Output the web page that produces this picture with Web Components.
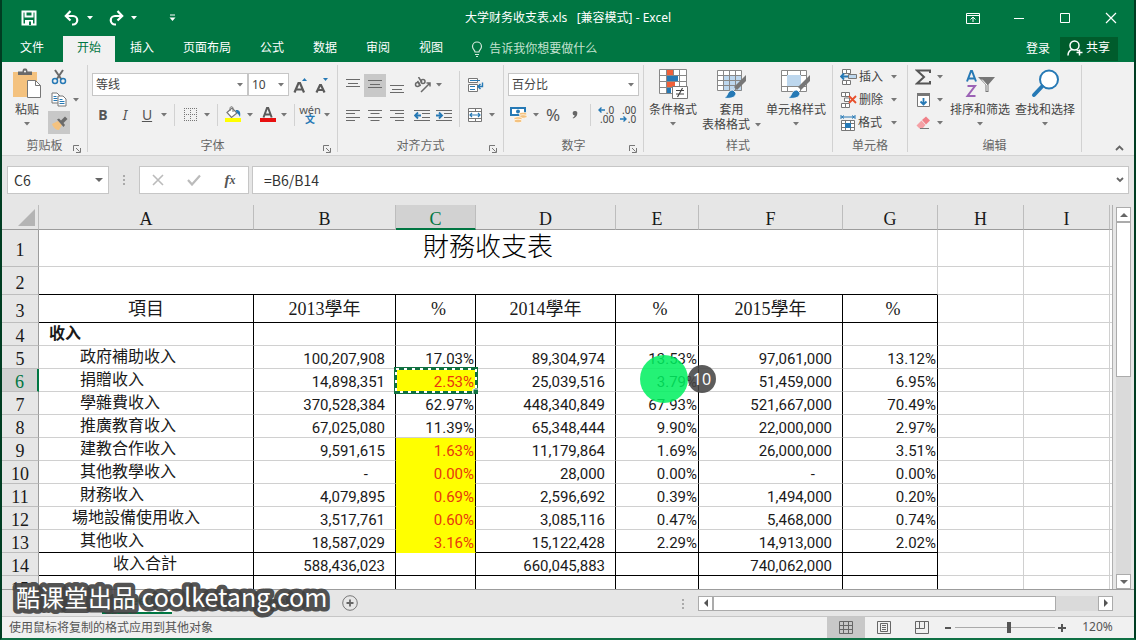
<!DOCTYPE html>
<html lang="zh-CN">
<head>
<meta charset="utf-8">
<title>大学财务收支表.xls - Excel</title>
<style>
    html, body { margin: 0; height: 100%; }
    body {
        --green: #007642;
        --ink: #444;
        --line: #c6c6c6;
        --chrome: #e6e6e6;
        --ribbon: #f1f1f1;
        --blue: #2679b5;
        font: 12px/16px "Noto Sans", "Noto Sans CJK SC", sans-serif;
        color: var(--ink);
        overflow: hidden;
    }
</style>
</head>
<body>
<excel-window></excel-window>

<script>
const ICONS = {
    save: [16, 16, `<path d="M1.500 1.500h13v13h-13z M4.500 1.500v5h7v-5" fill="none" stroke="#fff" stroke-width="2"/><path d="M4 10h8v4H4z" fill="#fff"/><path d="M8 11.500h2V15H8z" fill="#007642"/>`],
    undo: [16, 16, `<path d="M2 6h7a4.2 4.2 0 0 1 0 8.500H8" fill="none" stroke="#fff" stroke-width="2.200"/><path d="M6.500 1 1.800 6l4.700 4.500" fill="none" stroke="#fff" stroke-width="2.200"/>`],
    redo: [16, 16, `<path d="M14 6H7a4.2 4.2 0 0 0 0 8.500h1" fill="none" stroke="#fff" stroke-width="2.200"/><path d="M9.500 1l4.700 5-4.700 4.500" fill="none" stroke="#fff" stroke-width="2.200"/>`],
    customize: [7, 8, `<path d="M1 1h5" stroke="#fff"/><path d="M0.500 3.500h6l-3 3.500z" fill="#fff"/>`],
    caret: [6, 4, `<path d="M0 0h6L3 3.500z" fill="currentColor"/>`],
    ribbonopts: [14, 11, `<path d="M.5.500h13v10H.5z M.5 2.500h13 M7 9V4.500 M4.500 6.500 7 4l2.500 2.500" fill="none" stroke="#fff"/>`],
    minimize: [12, 12, `<path d="M1 6.500h10" stroke="#fff"/>`],
    maximize: [12, 12, `<path d="M1.500 1.500h9v9h-9z" fill="none" stroke="#fff"/>`],
    close: [12, 12, `<path d="M1 1l10 10M11 1 1 11" stroke="#fff" stroke-width="1.200"/>`],
    bulb: [12, 16, `<path d="M4 11c0-2-2.500-2.500-2.500-5.500a4.500 4.500 0 0 1 9 0C10.500 8.500 8 9 8 11z M4 13.500h4 M5 15.500h2" fill="none" stroke="#d5eadd" stroke-width="1.200"/>`],
    person: [17, 16, `<circle cx="7.500" cy="5.500" r="4.500" fill="none" stroke="#fff" stroke-width="1.500"/><path d="M1 15.500c0-4 2-5.500 4.500-6 M9.500 9.500l2 1.500 M12.500 9.500v6 M9.500 12.500h6" fill="none" stroke="#fff" stroke-width="1.500"/>`],
    paste: [30, 31, `<path d="M1 4h24v25H1z" fill="#f4c27f"/><path d="M6 7V3.500h4.500C10.500 1 11.500.500 13 .500s2.500.500 2.500 3H20V7z" fill="#6a6a6a"/><circle cx="13" cy="3.500" r="1" fill="#fff"/><path d="M15.500 12.500h8l5 5v12h-13z" fill="#fff" stroke="#777"/><path d="M23.500 12.500v5h5" fill="none" stroke="#777"/>`],
    cut: [16, 16, `<path d="M4 1l6.500 9.500M12 1 5.500 10.500" stroke="#6a6a6a" stroke-width="2"/><circle cx="4" cy="12" r="2.500" fill="none" stroke="#2679b5" stroke-width="1.500"/><circle cx="12" cy="12" r="2.500" fill="none" stroke="#2679b5" stroke-width="1.500"/>`],
    copy: [16, 15, `<path d="M1 1h5l3 3v7H1z" fill="#fff" stroke="#777"/><path d="M2.500 4.500h3M2.500 6.500h4M2.500 8.500h4" stroke="#2679b5"/><path d="M7 4h5l3 3v7H7z" fill="#fff" stroke="#777"/><path d="M8.500 7.500h3M8.500 9.500h5M8.500 11.500h5" stroke="#2679b5"/>`],
    painter: [17, 16, `<path d="M1 9l6-3 4 4-3 5c-2 0-5-1-7-6z" fill="#f4c27f"/><path d="M6 4.500l2-1 2 2 4-4 2.500 2.500-4 4 1.500 2-1.500 2z" fill="#6a6a6a"/>`],
    growfont: [15, 16, `<path d="M1.500 15.500 5.500 6h1.500l4 9.500M3 12.500h6.500" fill="none" stroke="#5a5a5a" stroke-width="2.200"/><path d="M9 4h5l-2.500-3z" fill="#2679b5"/>`],
    shrinkfont: [14, 16, `<path d="M1.500 15.500 5 8h1l3.500 7.500M3 13h5" fill="none" stroke="#5a5a5a" stroke-width="2.200"/><path d="M8 1h5l-2.500 3z" fill="#2679b5"/>`],
    border: [15, 15, `<path d="M1 1.500h13M1 7.500h13M1.500 1v13M7.500 1v13M13.500 1v13" stroke="#777" stroke-dasharray="1 1"/><path d="M1 13.500h13" stroke="#777" stroke-dasharray="1 1"/>`],
    bucket: [18, 17, `<path d="M3 6.500 8 2l5 5-5.500 4.500z" fill="#fff" stroke="#777" stroke-width="1.200"/><path d="M6 5V2.500C6 0 9 0 9 2.500V6" fill="none" stroke="#777"/><path d="M11.500 4c4-.5 5.500 2 4.500 7-1-2-1.500-3-3-4z" fill="#2679b5"/><path d="M1 12h16v4H1z" fill="#ff0"/>`],
    fontcolor: [17, 17, `<path d="M4.500 11.500 8 2h1.200l3.500 9.500M6 8.500h5.500" fill="none" stroke="#5a5a5a" stroke-width="2"/><path d="M1 12h16v4H1z" fill="#e81010"/>`],
    alignTop: [14, 15, `<path d="M0 1.500h14M2 5.500h10M0 8.500h14" stroke="#6a6a6a"/>`],
    alignMid: [14, 13, `<path d="M0 1.500h14M2 5.500h10M0 8.500h14" stroke="#6a6a6a"/>`],
    alignBot: [14, 17, `<path d="M0 8.500h14M2 12.500h10M0 15.500h14" stroke="#6a6a6a"/>`],
    left: [14, 13, `<path d="M0 1.500h14M0 4.500h9M0 8.500h14M0 11.500h9" stroke="#6a6a6a"/>`],
    center: [14, 13, `<path d="M0 1.500h14M2.500 4.500h9M0 8.500h14M2.500 11.500h9" stroke="#6a6a6a"/>`],
    right: [14, 13, `<path d="M0 1.500h14M5 4.500h9M0 8.500h14M5 11.500h9" stroke="#6a6a6a"/>`],
    orient: [17, 16, `<g fill="none" stroke="#6a6a6a" stroke-width="1.500"><circle cx="3.500" cy="7.500" r="2"/><path d="M3.500 4 6.500 9"/><circle cx="9" cy="4.500" r="2"/><path d="M4.500 0 8 5.500M7 15 16 6M16 9.500V6h-3.500"/></g>`],
    outdent: [16, 13, `<path d="M0 1.500h16M8 4.500h8M8 8.500h8M0 11.500h16" stroke="#6a6a6a"/><path d="M1 6.500h6M4 3.500l-3 3 3 3" fill="none" stroke="#2679b5" stroke-width="1.800"/>`],
    indent: [16, 13, `<path d="M0 1.500h16M8 4.500h8M8 8.500h8M0 11.500h16" stroke="#6a6a6a"/><path d="M0 6.500h6M3 3.500l3 3-3 3" fill="none" stroke="#2679b5" stroke-width="1.800"/>`],
    wrap: [17, 16, `<path d="M1.500 1.500h9v4h-9zM1.500 7.500h9v7h-9z" fill="#fff" stroke="#777"/><path d="M3 3.500h10M3 9.500h5M3 12.500h5" stroke="#2679b5"/><path d="M15.500 5.500v4h-4M13.500 7l-2.500 2.500 2.500 2.500" fill="none" stroke="#2679b5" stroke-width="1.400"/>`],
    merge: [16, 16, `<path d="M1.500 1.500h13v13h-13z M1.500 4.500h13M1.500 11.500h13M8.500 1.500v3M8.500 11.500v3" fill="#fff" stroke="#777"/><path d="M3 8h10M5 6 3 8l2 2M11 6l2 2-2 2" fill="none" stroke="#2679b5" stroke-width="1.200"/>`],
    money: [18, 17, `<path d="M0 1h16v9H0z" fill="#2679b5"/><path d="M2 3h12v5H2z" fill="#fff"/><circle cx="8" cy="5.500" r="2" fill="#2679b5"/><g fill="#f4c27f" stroke="#fff" stroke-width=".7"><ellipse cx="13" cy="8" rx="4" ry="1.800"/><ellipse cx="13" cy="10.500" rx="4" ry="1.800"/><ellipse cx="8" cy="12.500" rx="4" ry="1.800"/><ellipse cx="8" cy="15" rx="4" ry="1.800"/></g>`],
    comma: [8, 14, `<path d="M4 3a2.200 2.200 0 0 1 2.300 2.500C6.300 8 4.500 9.500 2 10.500l-.3-.8C3 9 3.700 8.200 3.700 7.500A2.200 2.200 0 0 1 4 3z" fill="#666"/>`],
    cond: [30, 32, `<path d="M1.500 1.500h27v24h-27zM1.500 7.500h27M1.500 13.500h27M1.500 19.500h27M8.500 1.500v24M15.500 1.500v24M21.500 1.500v24" fill="#fff" stroke="#888"/><path d="M9 2h6v5H9zM9 14h8v5H9z" fill="#f0603a"/><path d="M9 8h11v5H9zM9 20h4v5H9z" fill="#2679b5"/><path d="M14.500 18.500h15v12h-15z" fill="#fff" stroke="#777"/><path d="M18 22.500h8M18 26h8M24.500 20l-5 9" stroke="#444" stroke-width="1.200"/>`],
    tablefmt: [31, 30, `<path d="M1.500 1.500h24v20h-24z" fill="#fff"/><path d="M8 7h18v15H8z" fill="#bdd7ee"/><path d="M1.500 1.500h24v20h-24zM1.500 6.500h24M1.500 11.500h24M1.500 16.500h24M7.500 1.500v20M13.500 1.500v20M19.500 1.500v20" fill="none" stroke="#888"/><path d="M30 6v6l-9 9-3-3z" fill="#777"/><path d="M8 29c4-1 3-8 9-8l3 3c0 5-7 6-12 5z" fill="#2679b5" stroke="#fff" stroke-width=".8"/>`],
    cellstyle: [31, 30, `<path d="M1.500 1.500h25v21h-25zM1.500 6.500h25M1.500 17.500h25M7.500 1.500v21M20.500 1.500v21" fill="#fff" stroke="#888"/><path d="M7 6h14v11H7z" fill="#bdd7ee"/><path d="M30 6v6l-9 9-3-3z" fill="#777"/><path d="M8 29c4-1 3-8 9-8l3 3c0 5-7 6-12 5z" fill="#2679b5" stroke="#fff" stroke-width=".8"/>`],
    insert: [17, 16, `<path d="M2.500.500h4v4h-4zM6.500.500h4v4h-4zM2.500 11.500h4v4h-4zM6.500 11.500h4v4h-4z" fill="#fff" stroke="#777"/><path d="M8.500 5.500h8v4h-8z" fill="#bdd7ee" stroke="#777"/><path d="M1 7.500h7M4 4.500l-3 3 3 3" fill="none" stroke="#2679b5" stroke-width="1.800"/>`],
    remove: [17, 16, `<path d="M1.500.500h4v4h-4zM5.500.500h4v4h-4zM1.500 11.500h4v4h-4zM5.500 11.500h4v4h-4zM4.500 6h5v3.500h-5z" fill="#fff" stroke="#777"/><path d="M9 4l7 7M16 4l-7 7" stroke="#e8502c" stroke-width="1.800"/>`],
    format: [16, 16, `<path d="M1 2h14M1 0v4M15 0v4M4 .5 2 2l2 1.500M12 .500 14 2l-2 1.500" fill="none" stroke="#2679b5"/><path d="M1.500 5.500h13v10h-13zM1.500 8.500h13M1.500 12.500h13M5.500 5.500v10M10.500 5.500v10" fill="#fff" stroke="#777"/><path d="M5 8h6v5H5z" fill="#2679b5"/>`],
    sum: [17, 16, `<path d="M15 4V1.500H2L9 8l-7 6.500h13V12" fill="none" stroke="#555" stroke-width="2"/>`],
    fill: [15, 16, `<path d="M1.500 1.500h12v13h-12z" fill="#fff" stroke="#777"/><path d="M1 1h13v3H1z" fill="#777"/><path d="M7.500 6v6.500M4.500 9.500l3 3 3-3" fill="none" stroke="#2679b5" stroke-width="1.800"/>`],
    eraser: [16, 14, `<path d="M7 4l4-3.500 4 4-4 4z" fill="#f08088"/><path d="M6.500 4.500l4 4.500-3 3.500H4.500l-3-3z" fill="#f5a0a5"/><path d="M5 12.500h9" stroke="#777"/>`],
    sort: [30, 30, `<path d="M2 12.500 6 2h1l4 10.500M3.500 9.500h6" fill="none" stroke="#2679b5" stroke-width="2"/><path d="M2.500 17h7.500L2.500 27h8" fill="none" stroke="#9b62b5" stroke-width="2"/><path d="M13 8h17l-6.500 7.500v7.500h-3v-7.500z" fill="#777"/><path d="M17 10.500l5 5.500v6" fill="none" stroke="#fff"/>`],
    find: [30, 30, `<circle cx="19" cy="10.500" r="9" fill="#fff" stroke="#2679b5" stroke-width="2"/><path d="M12 17.500 4 26" stroke="#2679b5" stroke-width="4" stroke-linecap="round"/>`],
    launcher: [8, 8, `<path d="M.5 6V.5H6M7.500 3v4.500H3M3 3l3.500 3.500" fill="none" stroke="#777"/>`],
    collapse: [9, 6, `<path d="M1 5l3.500-3.500L8 5" fill="none" stroke="#666" stroke-width="1.800"/>`],
    expand: [8, 6, `<path d="M1 1l3 3 3-3" fill="none" stroke="#666" stroke-width="1.800"/>`],
    dots: [2, 12, `<path d="M0 1h2v2H0zM0 5h2v2H0zM0 9h2v2H0z" fill="#aaa"/>`],
    cancel: [12, 12, `<path d="M1 1l10 10M11 1 1 11" stroke="#bbb" stroke-width="1.600"/>`],
    accept: [14, 12, `<path d="M1 6l4 4.500L13 1.500" fill="none" stroke="#bbb" stroke-width="2.200"/>`],
    corner: [17, 17, `<path d="M17 0v17H0z" fill="#b4b4b4"/>`],
    up: [8, 4, `<path d="M0 4h8L4 0z" fill="#666"/>`],
    down: [8, 4, `<path d="M0 0h8L4 4z" fill="#666"/>`],
    prev: [4, 8, `<path d="M4 0v8L0 4z" fill="#555"/>`],
    next: [4, 8, `<path d="M0 0v8l4-4z" fill="#555"/>`],
    add: [16, 16, `<circle cx="8" cy="8" r="7.300" fill="none" stroke="#777"/><path d="M8 4.500v7M4.500 8h7" stroke="#666" stroke-width="1.800"/>`],
    viewNormal: [14, 14, `<path d="M.5.500h13v12H.5zM.5 4.500h13M.5 8.500h13M4.500.500v12M9.500.500v12" fill="none" stroke="#666"/>`],
    viewPage: [14, 14, `<path d="M.5.500h13v12H.5zM3.500 2.500h7v8h-7zM5 4.500h4M5 6.500h4M5 8.500h4" fill="none" stroke="#666"/>`],
    viewBreak: [14, 14, `<path d="M.5.500h13v12H.5zM4.500.500v7M9.500.500v7M.5 7.500h9" fill="none" stroke="#666"/>`],
    minus: [8, 8, `<path d="M1 4h6" stroke="#555" stroke-width="2"/>`],
    plus: [8, 8, `<path d="M0 4h8M4 0v8" stroke="#555" stroke-width="2"/>`]
};

const RESET = `
    button, input, select { font: inherit; color: inherit; margin: 0; padding: 0; border: 0; border-radius: 0; background: none; outline: 0; appearance: none; box-sizing: border-box; min-width: 0; }
    button { display: flex; align-items: center; justify-content: center; cursor: pointer; }
`;

class AppIcon extends HTMLElement {
    connectedCallback() {
        const [w, h, body] = ICONS[this.getAttribute('name')];
        this.attachShadow({ mode: 'open' }).innerHTML = `
            <style>:host { display: inline-flex; flex: none; } svg { display: block; }</style>
            <svg width="${w}" height="${h}" viewBox="0 0 ${w} ${h}" aria-hidden="true">${body}</svg>`;
    }
}
customElements.define('app-icon', AppIcon);

// Elements whose shadow markup never changes
function define(name, css, html) {
    customElements.define(name, class extends HTMLElement {
        connectedCallback() {
            if (this.shadowRoot) return;
            this.attachShadow({ mode: 'open' }).innerHTML = `<style>${RESET}${css}</style>${html}`;
        }
    });
}

// Small ribbon button; "drop" makes it a narrow arrow, "on" keeps it pressed
class ToolButton extends HTMLElement {
    connectedCallback() {
        const drop = this.hasAttribute('drop');
        const icon = drop ? 'caret' : this.getAttribute('icon');
        this.attachShadow({ mode: 'open' }).innerHTML = `
            <style>${RESET}
                :host { display: block; flex: none; }
                button { width: ${drop ? 12 : 22}px; height: 23px; color: ${drop ? '#777' : '#555'}; }
                button:hover, :host([on]) button { background: #c8c8c8; }
            </style>
            <button aria-label="${this.getAttribute('label') || '更多'}">${icon ? `<app-icon name="${icon}"></app-icon>` : '<slot></slot>'}</button>`;
    }
}
customElements.define('tool-button', ToolButton);

// Large button: icon on top, caption underneath, arrow last
class BigButton extends HTMLElement {
    connectedCallback() {
        const inline = this.hasAttribute('inline-arrow');
        this.attachShadow({ mode: 'open' }).innerHTML = `
            <style>${RESET}
                :host { display: block; flex: none; }
                button { flex-direction: column; justify-content: flex-start; line-height: 15px; white-space: nowrap; }
                .pic { height: 37px; display: flex; align-items: center; }
                .row { display: flex; align-items: center; gap: 5px; }
                .arrow { height: 14px; display: flex; align-items: center; color: #777; }
                .row app-icon { color: #777; }
            </style>
            <button>
                <span class="pic"><app-icon name="${this.getAttribute('icon')}"></app-icon></span>
                <slot></slot>
                ${inline
                    ? `<span class="row"><slot name="second"></slot><app-icon name="caret"></app-icon></span>`
                    : `<span class="arrow"><app-icon name="caret"></app-icon></span>`}
            </button>`;
    }
}
customElements.define('big-button', BigButton);

class ComboBox extends HTMLElement {
    connectedCallback() {
        const value = this.getAttribute('value');
        this.attachShadow({ mode: 'open' }).innerHTML = `
            <style>${RESET}
                :host { display: grid; height: 23px; box-sizing: border-box; background: #fff; border: 1px solid var(--line); }
                select, app-icon { grid-area: 1 / 1; }
                select { width: 100%; padding: 0 14px 0 3px; }
                app-icon { justify-self: end; align-self: center; margin-right: 4px; color: #777; pointer-events: none; }
            </style>
            <select aria-label="${this.getAttribute('label')}"><option>${value}</option></select>
            <app-icon name="caret"></app-icon>`;
    }
}
customElements.define('combo-box', ComboBox);

class RibbonGroup extends HTMLElement {
    connectedCallback() {
        const label = this.getAttribute('label');
        this.attachShadow({ mode: 'open' }).innerHTML = `
            <style>${RESET}
                :host { display: grid; grid-template-rows: 1fr 14px; box-sizing: border-box; height: 87px; padding: 0 4px; border-right: 1px solid #d2d2d2; }
                .foot { display: grid; grid-template-columns: 12px 1fr 12px; align-items: start; color: #666; text-align: center; }
                .foot button { margin-top: 7px; }
            </style>
            <div><slot></slot></div>
            <div class="foot"><span></span><span>${label}</span>${this.hasAttribute('launcher') ? `<button aria-label="${label}设置"><app-icon name="launcher"></app-icon></button>` : ''}</div>`;
    }
}
customElements.define('ribbon-group', RibbonGroup);

define('title-bar', `
    :host { display: grid; grid-template-columns: 1fr auto 1fr; align-items: center; height: 36px; background: var(--green); color: #fff; }
    .quick { display: flex; align-items: center; padding-left: 14px; }
    .quick button { height: 30px; width: 26px; }
    .quick .drop { width: 10px; }
    .quick .gap { margin-left: 17px; }
    .quick .near { margin-left: 8px; }
    .quick .last { margin-left: 28px; }
    .title { white-space: pre; }
    .win { display: flex; justify-content: flex-end; }
    .win button { width: 46px; height: 34px; }
`, `
    <div class="quick">
        <button aria-label="保存"><app-icon name="save"></app-icon></button>
        <button class="gap" aria-label="撤消"><app-icon name="undo"></app-icon></button>
        <button class="drop" aria-label="撤消列表"><app-icon name="caret"></app-icon></button>
        <button class="near" aria-label="恢复"><app-icon name="redo"></app-icon></button>
        <button class="drop" aria-label="恢复列表"><app-icon name="caret"></app-icon></button>
        <button class="drop last" aria-label="自定义快速访问工具栏"><app-icon name="customize"></app-icon></button>
    </div>
    <div class="title">大学财务收支表.xls   [兼容模式] - Excel</div>
    <div class="win">
        <button aria-label="功能区显示选项"><app-icon name="ribbonopts"></app-icon></button>
        <button aria-label="最小化"><app-icon name="minimize"></app-icon></button>
        <button aria-label="最大化"><app-icon name="maximize"></app-icon></button>
        <button aria-label="关闭"><app-icon name="close"></app-icon></button>
    </div>
`);

define('ribbon-tabs', `
    :host { display: flex; height: 26px; background: var(--green); color: #fff; }
    nav { display: flex; gap: 1px; flex: 1; }
    nav button { padding: 0 14px 2px; }
    nav .file { padding: 0 18px 2px; }
    nav .active { background: var(--ribbon); color: var(--green); }
    nav .tell { gap: 6px; color: #c4e2d0; padding: 0 13px; }
    .login { padding: 0 10px; }
    .share { background: #005c2c; height: 24px; margin: 1px 16px 0 0; padding: 0 8px 2px 7px; gap: 2px; }
`, `
    <nav>
        <button class="file">文件</button>
        <button class="active">开始</button>
        <button>插入</button>
        <button>页面布局</button>
        <button>公式</button>
        <button>数据</button>
        <button>审阅</button>
        <button>视图</button>
        <button class="tell"><app-icon name="bulb"></app-icon>告诉我你想要做什么</button>
    </nav>
    <button class="login">登录</button>
    <button class="share"><app-icon name="person"></app-icon>共享</button>
`);

define('ribbon-bar', `
    :host { display: flex; height: 94px; box-sizing: border-box; padding-top: 3px; background: var(--ribbon); border-bottom: 1px solid #d2d2d2; overflow: hidden; }
    .clip { width: 86px; } .font { width: 250px; } .align { width: 166px; } .num { width: 140px; }
    .styles { width: 189px; } .cells { width: 75px; } .edit { width: 174px; }
    .row { display: flex; align-items: center; }
    .rows { display: grid; grid-template-rows: 23px 23px; row-gap: 7px; padding-top: 8px; }
    .sep { width: 1px; height: 22px; margin: 0 4px; background: #d2d2d2; flex: none; }
    .tall { height: 56px; margin-top: 6px; }
    .stack { display: grid; grid-auto-rows: 23px; align-items: center; }
    .bigs { display: flex; justify-content: space-between; }
    .styles .bigs { padding: 0 2px 0 1px; }
    .edit .row { align-items: flex-start; }
    .edit .bigs { gap: 5px; padding-left: 4px; }
    .clip big-button { width: 32px; margin-left: 6px; }
    .clip .stack { margin-left: 1px; }
    .clip .row { align-items: flex-start; }
    .fam { flex: 1; } .size { width: 41px; }
    .gap { margin-left: 3px; }
    .cells button { justify-content: flex-start; width: 100%; height: 23px; gap: 2px; }
    .cells button app-icon:last-child { margin-left: auto; margin-right: 6px; color: #777; }
    .cells .stack { padding-left: 3px; }
    b, i, u { font-size: 14px; color: #555; }
    .pct { font-size: 17px; color: #555; }
    .wen { display: grid; font-size: 11px; line-height: 9px; text-align: center; }
    .wen em { font-style: normal; color: var(--blue); font-size: 10px; line-height: 11px; font-weight: bold; }
    .dec { display: grid; font-size: 10px; line-height: 9px; color: #444; }
    .dec span { display: flex; align-items: center; justify-content: flex-end; gap: 1px; }
    .dec svg { display: block; }
    .rest { flex: 1; display: flex; justify-content: flex-end; align-items: flex-end; padding: 0 10px 4px 0; }
`, `
    <ribbon-group class="clip" label="剪贴板" launcher>
        <div class="row">
            <big-button icon="paste">粘贴</big-button>
            <div class="stack">
                <div class="row"><tool-button class="gap" icon="cut" label="剪切"></tool-button></div>
                <div class="row"><tool-button class="gap" icon="copy" label="复制"></tool-button><tool-button drop></tool-button></div>
                <div class="row"><tool-button class="gap" icon="painter" label="格式刷" on></tool-button></div>
            </div>
        </div>
    </ribbon-group>
    <ribbon-group class="font" label="字体" launcher>
        <div class="rows">
            <div class="row">
                <combo-box class="fam" label="字体" value="等线"></combo-box>
                <combo-box class="size" label="字号" value="10"></combo-box>
                <tool-button icon="growfont" label="增大字号"></tool-button>
                <tool-button icon="shrinkfont" label="减小字号"></tool-button>
            </div>
            <div class="row">
                <tool-button label="加粗"><b>B</b></tool-button>
                <tool-button label="倾斜"><i>I</i></tool-button>
                <tool-button label="下划线"><u>U</u></tool-button>
                <tool-button drop></tool-button>
                <span class="sep"></span>
                <tool-button icon="border" label="边框"></tool-button>
                <tool-button drop></tool-button>
                <span class="sep"></span>
                <tool-button icon="bucket" label="填充颜色"></tool-button>
                <tool-button drop></tool-button>
                <tool-button icon="fontcolor" label="字体颜色"></tool-button>
                <tool-button drop></tool-button>
                <span class="sep"></span>
                <tool-button label="拼音"><span class="wen">wén<em>文</em></span></tool-button>
                <tool-button drop></tool-button>
            </div>
        </div>
    </ribbon-group>
    <ribbon-group class="align" label="对齐方式" launcher>
        <div class="row">
            <div class="rows">
                <div class="row">
                    <tool-button icon="alignTop" label="顶端对齐"></tool-button>
                    <tool-button icon="alignMid" label="垂直居中" on></tool-button>
                    <tool-button icon="alignBot" label="底端对齐"></tool-button>
                    <tool-button class="gap" icon="orient" label="方向"></tool-button>
                    <tool-button drop></tool-button>
                </div>
                <div class="row">
                    <tool-button icon="left" label="左对齐"></tool-button>
                    <tool-button icon="center" label="居中"></tool-button>
                    <tool-button icon="right" label="右对齐"></tool-button>
                    <tool-button class="gap" icon="outdent" label="减少缩进量"></tool-button>
                    <tool-button icon="indent" label="增加缩进量"></tool-button>
                </div>
            </div>
            <span class="sep tall"></span>
            <div class="rows">
                <div class="row"><tool-button icon="wrap" label="自动换行"></tool-button></div>
                <div class="row"><tool-button icon="merge" label="合并后居中"></tool-button><tool-button drop></tool-button></div>
            </div>
        </div>
    </ribbon-group>
    <ribbon-group class="num" label="数字" launcher>
        <div class="rows">
            <combo-box label="数字格式" value="百分比"></combo-box>
            <div class="row">
                <tool-button icon="money" label="会计数字格式"></tool-button>
                <tool-button drop></tool-button>
                <tool-button label="百分比样式"><span class="pct">%</span></tool-button>
                <tool-button icon="comma" label="千位分隔样式"></tool-button>
                <span class="sep"></span>
                <tool-button label="增加小数位数"><span class="dec"><span><svg width="7" height="6" viewBox="0 0 7 6"><path d="M1 3h6M3.500.500 1 3l2.500 2.500" fill="none" stroke="#2679b5" stroke-width="1.400"/></svg>.0</span><span>.00</span></span></tool-button>
                <tool-button label="减少小数位数"><span class="dec"><span>.00</span><span><svg width="7" height="6" viewBox="0 0 7 6"><path d="M0 3h6M3.500.500 6 3 3.500 5.500" fill="none" stroke="#2679b5" stroke-width="1.400"/></svg>.0</span></span></tool-button>
            </div>
        </div>
    </ribbon-group>
    <ribbon-group class="styles" label="样式">
        <div class="bigs">
            <big-button icon="cond">条件格式</big-button>
            <big-button icon="tablefmt" inline-arrow>套用<span slot="second">表格格式</span></big-button>
            <big-button icon="cellstyle">单元格样式</big-button>
        </div>
    </ribbon-group>
    <ribbon-group class="cells" label="单元格">
        <div class="stack">
            <button><app-icon name="insert"></app-icon>插入<app-icon name="caret"></app-icon></button>
            <button><app-icon name="remove"></app-icon>删除<app-icon name="caret"></app-icon></button>
            <button><app-icon name="format"></app-icon>格式<app-icon name="caret"></app-icon></button>
        </div>
    </ribbon-group>
    <ribbon-group class="edit" label="编辑">
        <div class="row">
            <div class="stack">
                <div class="row"><tool-button icon="sum" label="求和"></tool-button><tool-button drop></tool-button></div>
                <div class="row"><tool-button icon="fill" label="填充"></tool-button><tool-button drop></tool-button></div>
                <div class="row"><tool-button icon="eraser" label="清除"></tool-button><tool-button drop></tool-button></div>
            </div>
            <div class="bigs">
                <big-button icon="sort">排序和筛选</big-button>
                <big-button icon="find">查找和选择</big-button>
            </div>
        </div>
    </ribbon-group>
    <div class="rest"><button aria-label="折叠功能区"><app-icon name="collapse"></app-icon></button></div>
`);

define('formula-bar', `
    :host { display: flex; align-items: stretch; height: 49px; box-sizing: border-box; padding: 10px 5px 11px; background: var(--chrome); font: 14px/20px "Noto Sans CJK SC", sans-serif; color: #333; }
    .box { display: flex; align-items: center; background: #fff; border: 1px solid var(--line); }
    .name { width: 100px; }
    .name input { width: 82px; padding-left: 6px; }
    .name button, .more { width: 18px; align-self: stretch; color: #777; }
    .grip { width: 30px; display: flex; align-items: center; justify-content: center; }
    .acts { width: 108px; justify-content: space-around; }
    .acts button { width: 34px; }
    .fx { font: italic bold 15px/20px "Liberation Serif", serif; color: #555; }
    .fx small { font-size: 12px; }
    .formula { flex: 1; margin-left: 3px; }
    .formula input { flex: 1; padding-left: 11px; }
    .more { width: 16px; }
`, `
    <div class="box name"><input aria-label="名称框" value="C6"><button aria-label="名称列表"><app-icon name="down"></app-icon></button></div>
    <div class="grip"><app-icon name="dots"></app-icon></div>
    <div class="box acts">
        <button aria-label="取消"><app-icon name="cancel"></app-icon></button>
        <button aria-label="输入"><app-icon name="accept"></app-icon></button>
        <button class="fx" aria-label="插入函数">f<small>x</small></button>
    </div>
    <div class="box formula"><input aria-label="编辑栏" value="=B6/B14"><button class="more" aria-label="展开编辑栏"><app-icon name="expand"></app-icon></button></div>
`);

const COLUMNS = [['A', 215], ['B', 142], ['C', 80], ['D', 140], ['E', 83], ['F', 144], ['G', 95], ['H', 86], ['I', 86]];
// label, indent, then B..G; a trailing * marks a highlighted cell
const ROWS = [
    ['收入', 10, '', '', '', '', '', ''],
    ['政府補助收入', 41, '100,207,908', '17.03%', '89,304,974', '13.53%', '97,061,000', '13.12%'],
    ['捐贈收入', 41, '14,898,351', '2.53%*', '25,039,516', '3.79%', '51,459,000', '6.95%'],
    ['學雜費收入', 41, '370,528,384', '62.97%', '448,340,849', '67.93%', '521,667,000', '70.49%'],
    ['推廣教育收入', 41, '67,025,080', '11.39%', '65,348,444', '9.90%', '22,000,000', '2.97%'],
    ['建教合作收入', 41, '9,591,615', '1.63%*', '11,179,864', '1.69%', '26,000,000', '3.51%'],
    ['其他教學收入', 41, '-', '0.00%*', '28,000', '0.00%', '-', '0.00%'],
    ['財務收入', 41, '4,079,895', '0.69%*', '2,596,692', '0.39%', '1,494,000', '0.20%'],
    ['場地設備使用收入', 33, '3,517,761', '0.60%*', '3,085,116', '0.47%', '5,468,000', '0.74%'],
    ['其他收入', 41, '18,587,029', '3.16%*', '15,122,428', '2.29%', '14,913,000', '2.02%'],
    ['收入合計', 74, '588,436,023', '', '660,045,883', '', '740,062,000', ''],
    ['', 0, '', '', '', '', '', '']
];

class SheetGrid extends HTMLElement {
    connectedCallback() {
        this.attachShadow({ mode: 'open' }).innerHTML = `
            <style>
                :host { display: block; position: relative; flex: 1; min-width: 0; overflow: hidden; background: #fff; box-sizing: border-box; color: #1a1a1a; }
                table { table-layout: fixed; width: 100%; border-spacing: 0; font: 15px/18px Roboto, sans-serif; }
                th, td { box-sizing: border-box; padding: 0; border: 0 solid #d0d0d0; border-width: 0 1px 1px 0; white-space: nowrap; font-weight: normal; }
                th { font: 18px/18px "Liberation Serif", serif; background: var(--chrome); border-color: #bdbdbd; padding-top: 4px; }
                thead th { border-bottom-color: #9c9c9c; }
                thead th:last-child { border-right: 0; }
                tbody th { border-right-color: #9c9c9c; }
                thead .on { background: #d2d2d2; color: var(--green); border-bottom: 2px solid var(--green); }
                tbody .on { background: #d2d2d2; color: var(--green); border-right: 2px solid var(--green); }
                .corner { text-align: right; padding-right: 3px; }
                td:last-child { border-right: 0; }
                .title { font: 26px/36px "Liberation Serif", "Noto Sans CJK TC", serif; font-weight: 300; text-align: center; color: #000; }
                .k { border-right-color: #000; }
                .kb { border-bottom-color: #000; }
                .head { font: 18px/20px "Liberation Serif", "Noto Sans CJK TC", serif; text-align: center; }
                .pc { padding-left: 6px; }
                .label { font: 16px/18px "Noto Sans CJK TC", sans-serif; vertical-align: top; }
                .bold { font-weight: bold; }
                .num { text-align: right; vertical-align: bottom; padding-right: 10px; }
                .pct { text-align: right; vertical-align: bottom; padding-right: 1px; }
                .dash { padding-right: 27px; }
                .hot { background: #ff0; color: #e8380d; border-bottom-color: #ff0; }
                .copied { position: relative; overflow: visible; }
                .copied svg { position: absolute; inset: -3px; width: calc(100% + 6px); height: calc(100% + 6px); }
            </style>
            <table>
                <colgroup><col style="width:37px">${COLUMNS.map(c => `<col style="width:${c[1]}px">`).join('')}<col></colgroup>
                <thead><tr style="height:25px">
                    <th class="corner"><app-icon name="corner"></app-icon></th>
                    ${COLUMNS.map(c => `<th class="${c[0] === 'C' ? 'on' : ''}">${c[0]}</th>`).join('')}<th></th>
                </tr></thead>
                <tbody>
                    <tr style="height:37px"><th>1</th><td class="title" colspan="7">財務收支表</td><td></td><td></td><td></td></tr>
                    <tr style="height:28px"><th>2</th><td class="kb" colspan="7"></td><td></td><td></td><td></td></tr>
                    <tr style="height:28px"><th>3</th>
                        ${['項目', '2013學年', '%', '2014學年', '%', '2015學年', '%'].map(t => `<td class="head k kb ${t === '%' ? 'pc' : ''}">${t}</td>`).join('')}
                        <td></td><td></td><td></td></tr>
                    ${ROWS.map((row, i) => this.renderRow(row, i + 4)).join('')}
                </tbody>
            </table>`;
    }

    renderRow([label, indent, ...values], number) {
        const line = number === 13 || number === 14 ? 'kb' : '';
        const cells = values.map((value, i) => {
            const hot = value.endsWith('*');
            const kind = i % 2 ? 'pct' : value === '-' ? 'num dash' : 'num';
            const copied = number === 6 && i === 1;
            return `<td class="${kind} k ${hot ? 'hot' : ''} ${line} ${copied ? 'copied' : ''}">${value.replace('*', '')}${copied ? this.renderOutline() : ''}</td>`;
        }).join('');
        return `<tr style="height:23px">
            <th class="${number === 6 ? 'on' : ''}">${number}</th>
            <td class="label k ${line} ${number === 4 ? 'bold' : ''}" style="padding-left:${indent}px">${label}</td>
            ${cells}<td></td><td></td><td></td></tr>`;
    }

    renderOutline() {
        return `<svg aria-hidden="true">
            <g fill="none"><rect x="2.500" y="2.500" width="81" height="24" stroke="#107040" stroke-width="3"/>
            <rect x="3" y="3" width="80" height="23" stroke="#fff" stroke-width="2" stroke-dasharray="3 5"/></g>
            <path d="M80 23h6v6h-6z" fill="#107040" stroke="#fff"/></svg>`;
    }
}
customElements.define('sheet-grid', SheetGrid);

define('scroll-y', `
    :host { display: flex; flex-direction: column; width: 22px; box-sizing: border-box; padding: 2px 3px 0; background: var(--chrome); border-left: 1px solid #b0b0b0; flex: none; }
    button, .thumb { background: #fff; border: 1px solid #ababab; box-sizing: border-box; }
    button { height: 15px; width: 100%; }
    .track { flex: 1; background: #dadada; }
    .thumb { height: 44%; }
`, `
    <button aria-label="向上滚动"><app-icon name="up"></app-icon></button>
    <div class="track"><div class="thumb"></div></div>
    <button aria-label="向下滚动"><app-icon name="down"></app-icon></button>
`);

define('sheet-tabs', `
    :host { display: grid; grid-template-columns: 696px 1fr; height: 28px; background: var(--chrome); box-sizing: border-box; border-top: 1px solid #9c9c9c; border-bottom: 1px solid #c6c6c6; }
    .tabs, .scroll { display: flex; align-items: center; }
    .tabs { padding-left: 100px; align-items: flex-start; }
    .tabs button { width: 70px; height: 24px; }
    .tabs .on { background: #fff; color: var(--green); font-weight: bold; border-bottom: 2px solid var(--green); box-sizing: border-box; }
    .tabs .add { width: 24px; margin-left: 26px; height: 26px; }
    .tabs app-icon[name=dots] { margin: 8px 14px 0 auto; }
    .scroll button { width: 15px; height: 15px; background: #fff; border: 1px solid #ababab; }
    .track { flex: 1; background: #dadada; height: 15px; }
    .thumb { width: 89%; height: 15px; box-sizing: border-box; background: #fff; border: 1px solid #ababab; }
    .scroll { padding-right: 21px; }
`, `
    <div class="tabs">
        <button class="on">Sheet1</button><button>Sheet2</button><button>Sheet3</button>
        <button class="add" aria-label="新工作表"><app-icon name="add"></app-icon></button>
        <app-icon name="dots"></app-icon>
    </div>
    <div class="scroll">
        <button aria-label="向左滚动"><app-icon name="prev"></app-icon></button>
        <div class="track"><div class="thumb"></div></div>
        <button aria-label="向右滚动"><app-icon name="next"></app-icon></button>
    </div>
`);

define('status-bar', `
    :host { display: flex; align-items: center; height: 21px; background: var(--ribbon); color: #555; }
    .msg { flex: 1; padding-left: 7px; }
    .view { width: 38px; height: 21px; }
    .view.on { background: #c8c8c8; }
    .step { width: 14px; height: 21px; }
    input { width: 100px; height: 11px; background: linear-gradient(#aaa, #aaa) center / 100% 1px no-repeat; }
    input::-webkit-slider-thumb { appearance: none; width: 4px; height: 11px; background: #555; }
    output { width: 65px; box-sizing: border-box; padding: 0 8px 2px 0; text-align: center; }
`, `
    <span class="msg">使用鼠标将复制的格式应用到其他对象</span>
    <button class="view on" aria-label="普通"><app-icon name="viewNormal"></app-icon></button>
    <button class="view" aria-label="页面布局"><app-icon name="viewPage"></app-icon></button>
    <button class="view" aria-label="分页预览"><app-icon name="viewBreak"></app-icon></button>
    <button class="step" aria-label="缩小"><app-icon name="minus"></app-icon></button>
    <input type="range" aria-label="显示比例" min="0" max="100" value="54">
    <button class="step" aria-label="放大"><app-icon name="plus"></app-icon></button>
    <output>120%</output>
`);

// Click marker with its countdown badge
define('click-marker', `
    :host { position: absolute; left: 638px; top: 150px; display: flex; align-items: center; pointer-events: none; }
    .spot { width: 48px; height: 48px; border-radius: 50%; background: #00f060; opacity: .86; }
    .count { width: 28px; height: 28px; border-radius: 50%; background: rgba(70, 70, 70, .88); color: #fff; font-size: 16px; line-height: 28px; text-align: center; }
`, `<span class="spot"></span><span class="count"><slot></slot></span>`);

// Outlined caption; the stroke sits behind the letters
class WaterMark extends HTMLElement {
    connectedCallback() {
        this.attachShadow({ mode: 'open' }).innerHTML = `
            <style>
                :host { position: absolute; left: 6px; bottom: 18px; pointer-events: none; }
                svg { display: block; }
                text { font: 25px "Noto Sans CJK SC", sans-serif; fill: #fff; stroke: #424242; stroke-opacity: .92; stroke-width: 9px; stroke-linejoin: round; paint-order: stroke; }
                .zh { font-size: 24px; }
            </style>
            <svg width="340" height="44"><text x="8" y="31"><tspan class="zh">${this.getAttribute('name')}</tspan> ${this.getAttribute('site')}</text></svg>`;
    }
}
customElements.define('water-mark', WaterMark);

define('excel-window', `
    :host { display: flex; flex-direction: column; height: 100vh; position: relative; box-sizing: border-box; border: 2px solid #003d22; border-width: 0 2px 2px; border-bottom-color: #0f7044; }
    .sheet { flex: 1; min-height: 0; display: flex; position: relative; }
`, `
    <title-bar></title-bar>
    <ribbon-tabs></ribbon-tabs>
    <ribbon-bar></ribbon-bar>
    <formula-bar></formula-bar>
    <div class="sheet">
        <sheet-grid></sheet-grid>
        <scroll-y></scroll-y>
        <click-marker>10</click-marker>
    </div>
    <sheet-tabs></sheet-tabs>
    <status-bar></status-bar>
    <water-mark name="酷课堂出品" site="coolketang.com"></water-mark>
`);
</script>
</body>
</html>
